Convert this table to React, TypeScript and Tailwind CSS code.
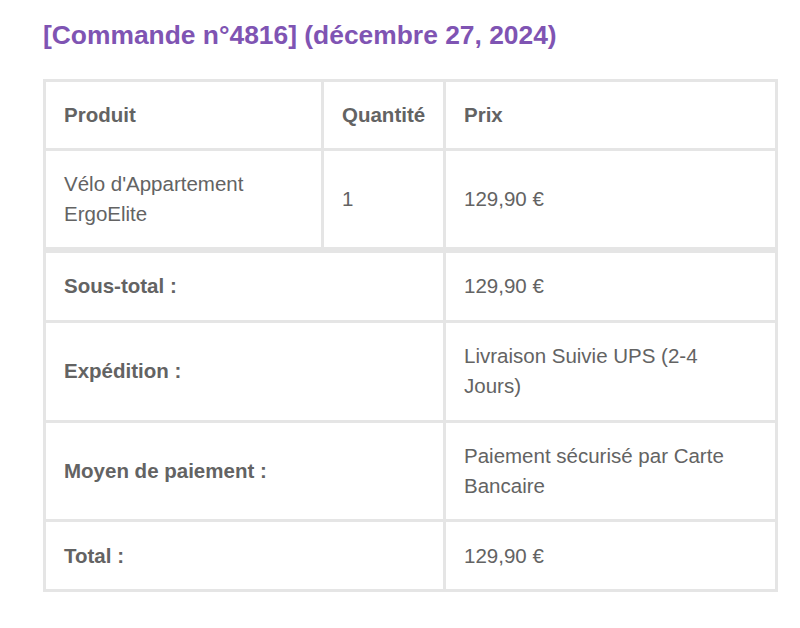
import React from "react";

const cell = "bg-white px-[18px] py-[18px] flex items-center leading-[30px]";
const fcell = "bg-white px-[18px] py-[18.4px] flex items-center leading-[30px]";

export default function App() {
  return (
    <div
      className="min-h-[628px] w-[800px] bg-white pl-[43px] pt-[18px] text-[#636363]"
      style={{ fontFamily: '"Liberation Sans", Arial, sans-serif' }}
    >
      <h2 className="m-0 text-[26.4px] font-bold leading-[34px] text-[#7f54b3] mb-[27px]">
        [Commande n°4816] (décembre 27, 2024)
      </h2>
      <div className="w-[735px] bg-[#e5e5e5] p-[3px] flex flex-col gap-[6px] text-[20.5px]">
        <div className="grid grid-cols-[275px_119px_329px] gap-[3px]">
          <div className={cell + " font-bold"}>Produit</div>
          <div className={cell + " font-bold"}>Quantité</div>
          <div className={cell + " font-bold"}>Prix</div>
          <div className={cell}>
            <span>
              Vélo d'Appartement
              <br />
              ErgoElite
            </span>
          </div>
          <div className={cell}>1</div>
          <div className={cell}>129,90 €</div>
        </div>
        <div className="grid grid-cols-[397px_329px] gap-[3px]">
          <div className={fcell + " font-bold"}>Sous-total :</div>
          <div className={fcell}>129,90 €</div>
          <div className={fcell + " font-bold"}>Expédition :</div>
          <div className={fcell}>
            <span>
              Livraison Suivie UPS (2-4
              <br />
              Jours)
            </span>
          </div>
          <div className={fcell + " font-bold"}>Moyen de paiement :</div>
          <div className={fcell}>
            <span>
              Paiement sécurisé par Carte
              <br />
              Bancaire
            </span>
          </div>
          <div className={fcell + " font-bold"}>Total :</div>
          <div className={fcell}>129,90 €</div>
        </div>
      </div>
    </div>
  );
}
